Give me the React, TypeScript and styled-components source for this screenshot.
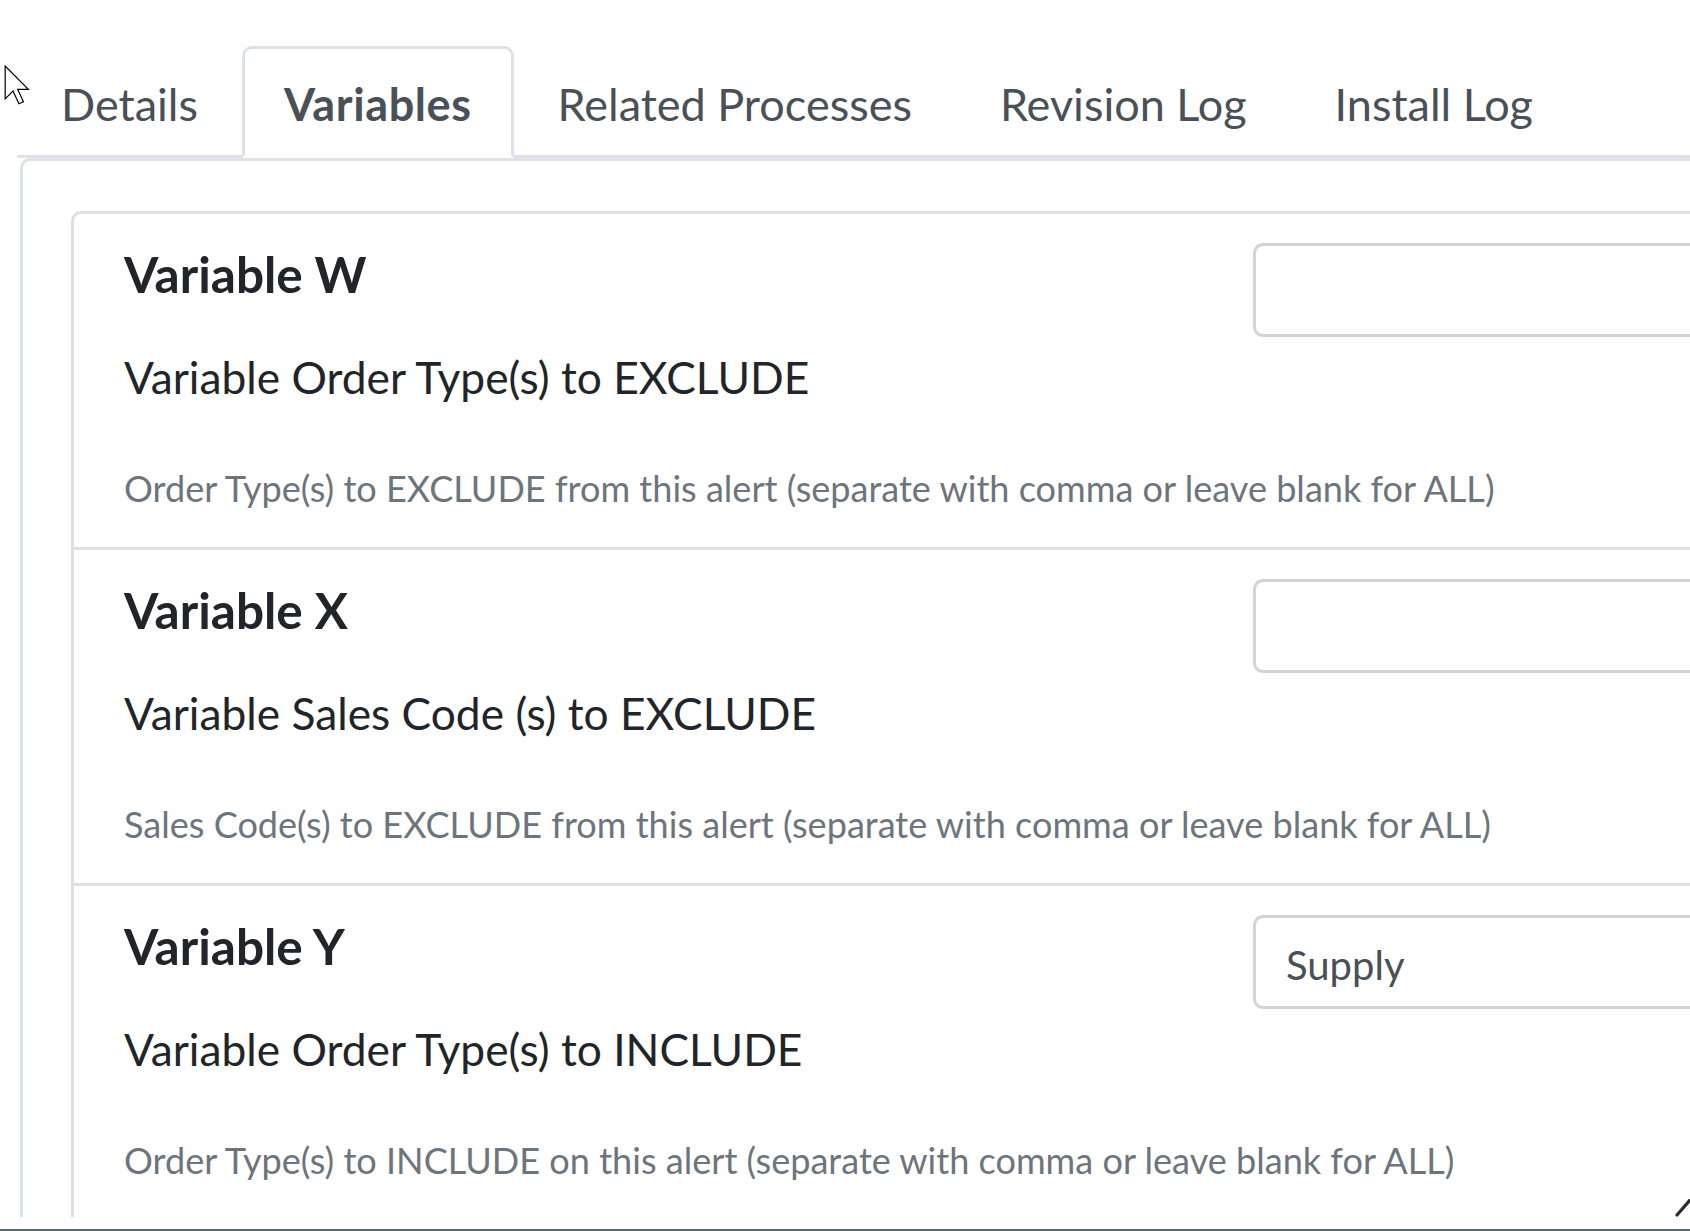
import React from "react";
import styled, { createGlobalStyle, css } from "styled-components";

const GlobalStyle = createGlobalStyle`
  html, body {
    margin: 0;
    padding: 0;
    background: #ffffff;
    overflow: hidden;
  }
  body {
    font-family: Lato, "Noto Sans", sans-serif;
    color: #212529;
  }
  * { box-sizing: border-box; }
`;

const Screen = styled.div`
  display: flex;
  flex-direction: column;
  width: 1690px;
  height: 1231px;
  overflow: hidden;
  background: #ffffff;
`;

const Viewport = styled.div`
  position: relative;
  flex: 0 0 1217px;
  overflow: hidden;
`;

const BottomStrip = styled.div`
  flex: 1 1 auto;
  background: #ffffff;
  border-bottom: 2px solid #56666a;
`;

const Page = styled.div`
  width: 1800px;
  padding: 46px 0 0 20px;
`;

const TabNav = styled.nav`
  display: flex;
  align-items: flex-end;
  margin-left: -3px;
  border-bottom: 3px solid #dee2e6;
`;

const Tab = styled.a<{ $active?: boolean }>`
  display: block;
  margin-bottom: -3px;
  padding: 22px 41px 18px;
  border: 3px solid transparent;
  border-top-left-radius: 10px;
  border-top-right-radius: 10px;
  font-size: 45px;
  line-height: 66px;
  color: #495057;
  white-space: nowrap;
  text-decoration: none;
  cursor: pointer;
  ${(p) =>
    p.$active &&
    css`
      padding-left: 39px;
      padding-right: 39px;
      background: #ffffff;
      border-color: #dee2e6 #dee2e6 #ffffff;
      font-weight: 700;
      letter-spacing: 0.6px;
    `}
`;

const TabPanel = styled.section`
  border: 3px solid #dee2e6;
  border-top-left-radius: 10px;
  padding: 50px 0 0 48px;
  min-height: 1100px;
`;

const VariableList = styled.div`
  display: flex;
  flex-direction: column;
  border: 3px solid #dfdfdf;
  border-top-left-radius: 10px;
  border-top-right-radius: 10px;
  border-bottom: none;
`;

const VariableItem = styled.div`
  padding: 29px 0 34px 50px;
  & + & {
    border-top: 3px solid #dfdfdf;
  }
`;

const ItemHeader = styled.div`
  display: grid;
  grid-template-columns: 1129px minmax(0, 1fr);
  align-items: start;
`;

const VarName = styled.h4`
  margin: 0;
  font-size: 49.5px;
  line-height: 62px;
  font-weight: 700;
  color: #212529;
`;

const ValueInput = styled.input`
  display: block;
  width: 100%;
  height: 94px;
  padding: 5px 30px 0;
  border: 3px solid #ced4da;
  border-radius: 10px;
  background: #ffffff;
  font-family: Lato, "Noto Sans", sans-serif;
  font-size: 40px;
  color: #495057;
  outline: none;
`;

const VarLabel = styled.p`
  margin: 10px 0 0;
  font-size: 44.3px;
  line-height: 60px;
  color: #212529;
`;

const VarHelp = styled.small`
  display: block;
  margin-top: 56px;
  font-size: 36.1px;
  line-height: 50px;
  color: #6c757d;
`;

const Cursor = styled.svg`
  position: absolute;
  left: 4px;
  top: 65px;
  width: 27px;
  height: 40px;
  pointer-events: none;
`;

const ResizeGrip = styled.svg`
  position: absolute;
  right: 0;
  bottom: 0;
  width: 15px;
  height: 18px;
`;

const tabs = ["Details", "Variables", "Related Processes", "Revision Log", "Install Log"];

const variables = [
  {
    name: "Variable W",
    label: "Variable Order Type(s) to EXCLUDE",
    help: "Order Type(s) to EXCLUDE from this alert (separate with comma or leave blank for ALL)",
    value: "",
  },
  {
    name: "Variable X",
    label: "Variable Sales Code (s) to EXCLUDE",
    help: "Sales Code(s) to EXCLUDE from this alert (separate with comma or leave blank for ALL)",
    value: "",
  },
  {
    name: "Variable Y",
    label: "Variable Order Type(s) to INCLUDE",
    help: "Order Type(s) to INCLUDE on this alert (separate with comma or leave blank for ALL)",
    value: "Supply",
  },
];

export default function App() {
  return (
    <>
      <GlobalStyle />
      <Screen>
        <Viewport>
          <Page>
            <TabNav>
              {tabs.map((t) => (
                <Tab key={t} $active={t === "Variables"}>
                  {t}
                </Tab>
              ))}
            </TabNav>
            <TabPanel>
              <VariableList>
                {variables.map((v) => (
                  <VariableItem key={v.name}>
                    <ItemHeader>
                      <VarName>{v.name}</VarName>
                      <ValueInput type="text" defaultValue={v.value} readOnly />
                    </ItemHeader>
                    <VarLabel>{v.label}</VarLabel>
                    <VarHelp>{v.help}</VarHelp>
                  </VariableItem>
                ))}
              </VariableList>
            </TabPanel>
          </Page>
          <Cursor viewBox="0 0 13 19.5">
            <path
              d="M0.5 0.5 L0.5 16.5 L4.3 12.7 L7.2 18.9 L9.4 17.9 L6.6 11.9 L11.8 11.9 Z"
              fill="#ffffff"
              stroke="#000000"
              strokeWidth="0.6"
              strokeLinejoin="miter"
            />
          </Cursor>
          <ResizeGrip viewBox="0 0 15 18">
            <line x1="2" y1="16" x2="15" y2="1" stroke="#2a2a2a" strokeWidth="3.2" strokeLinecap="round" />
          </ResizeGrip>
        </Viewport>
        <BottomStrip />
      </Screen>
    </>
  );
}
